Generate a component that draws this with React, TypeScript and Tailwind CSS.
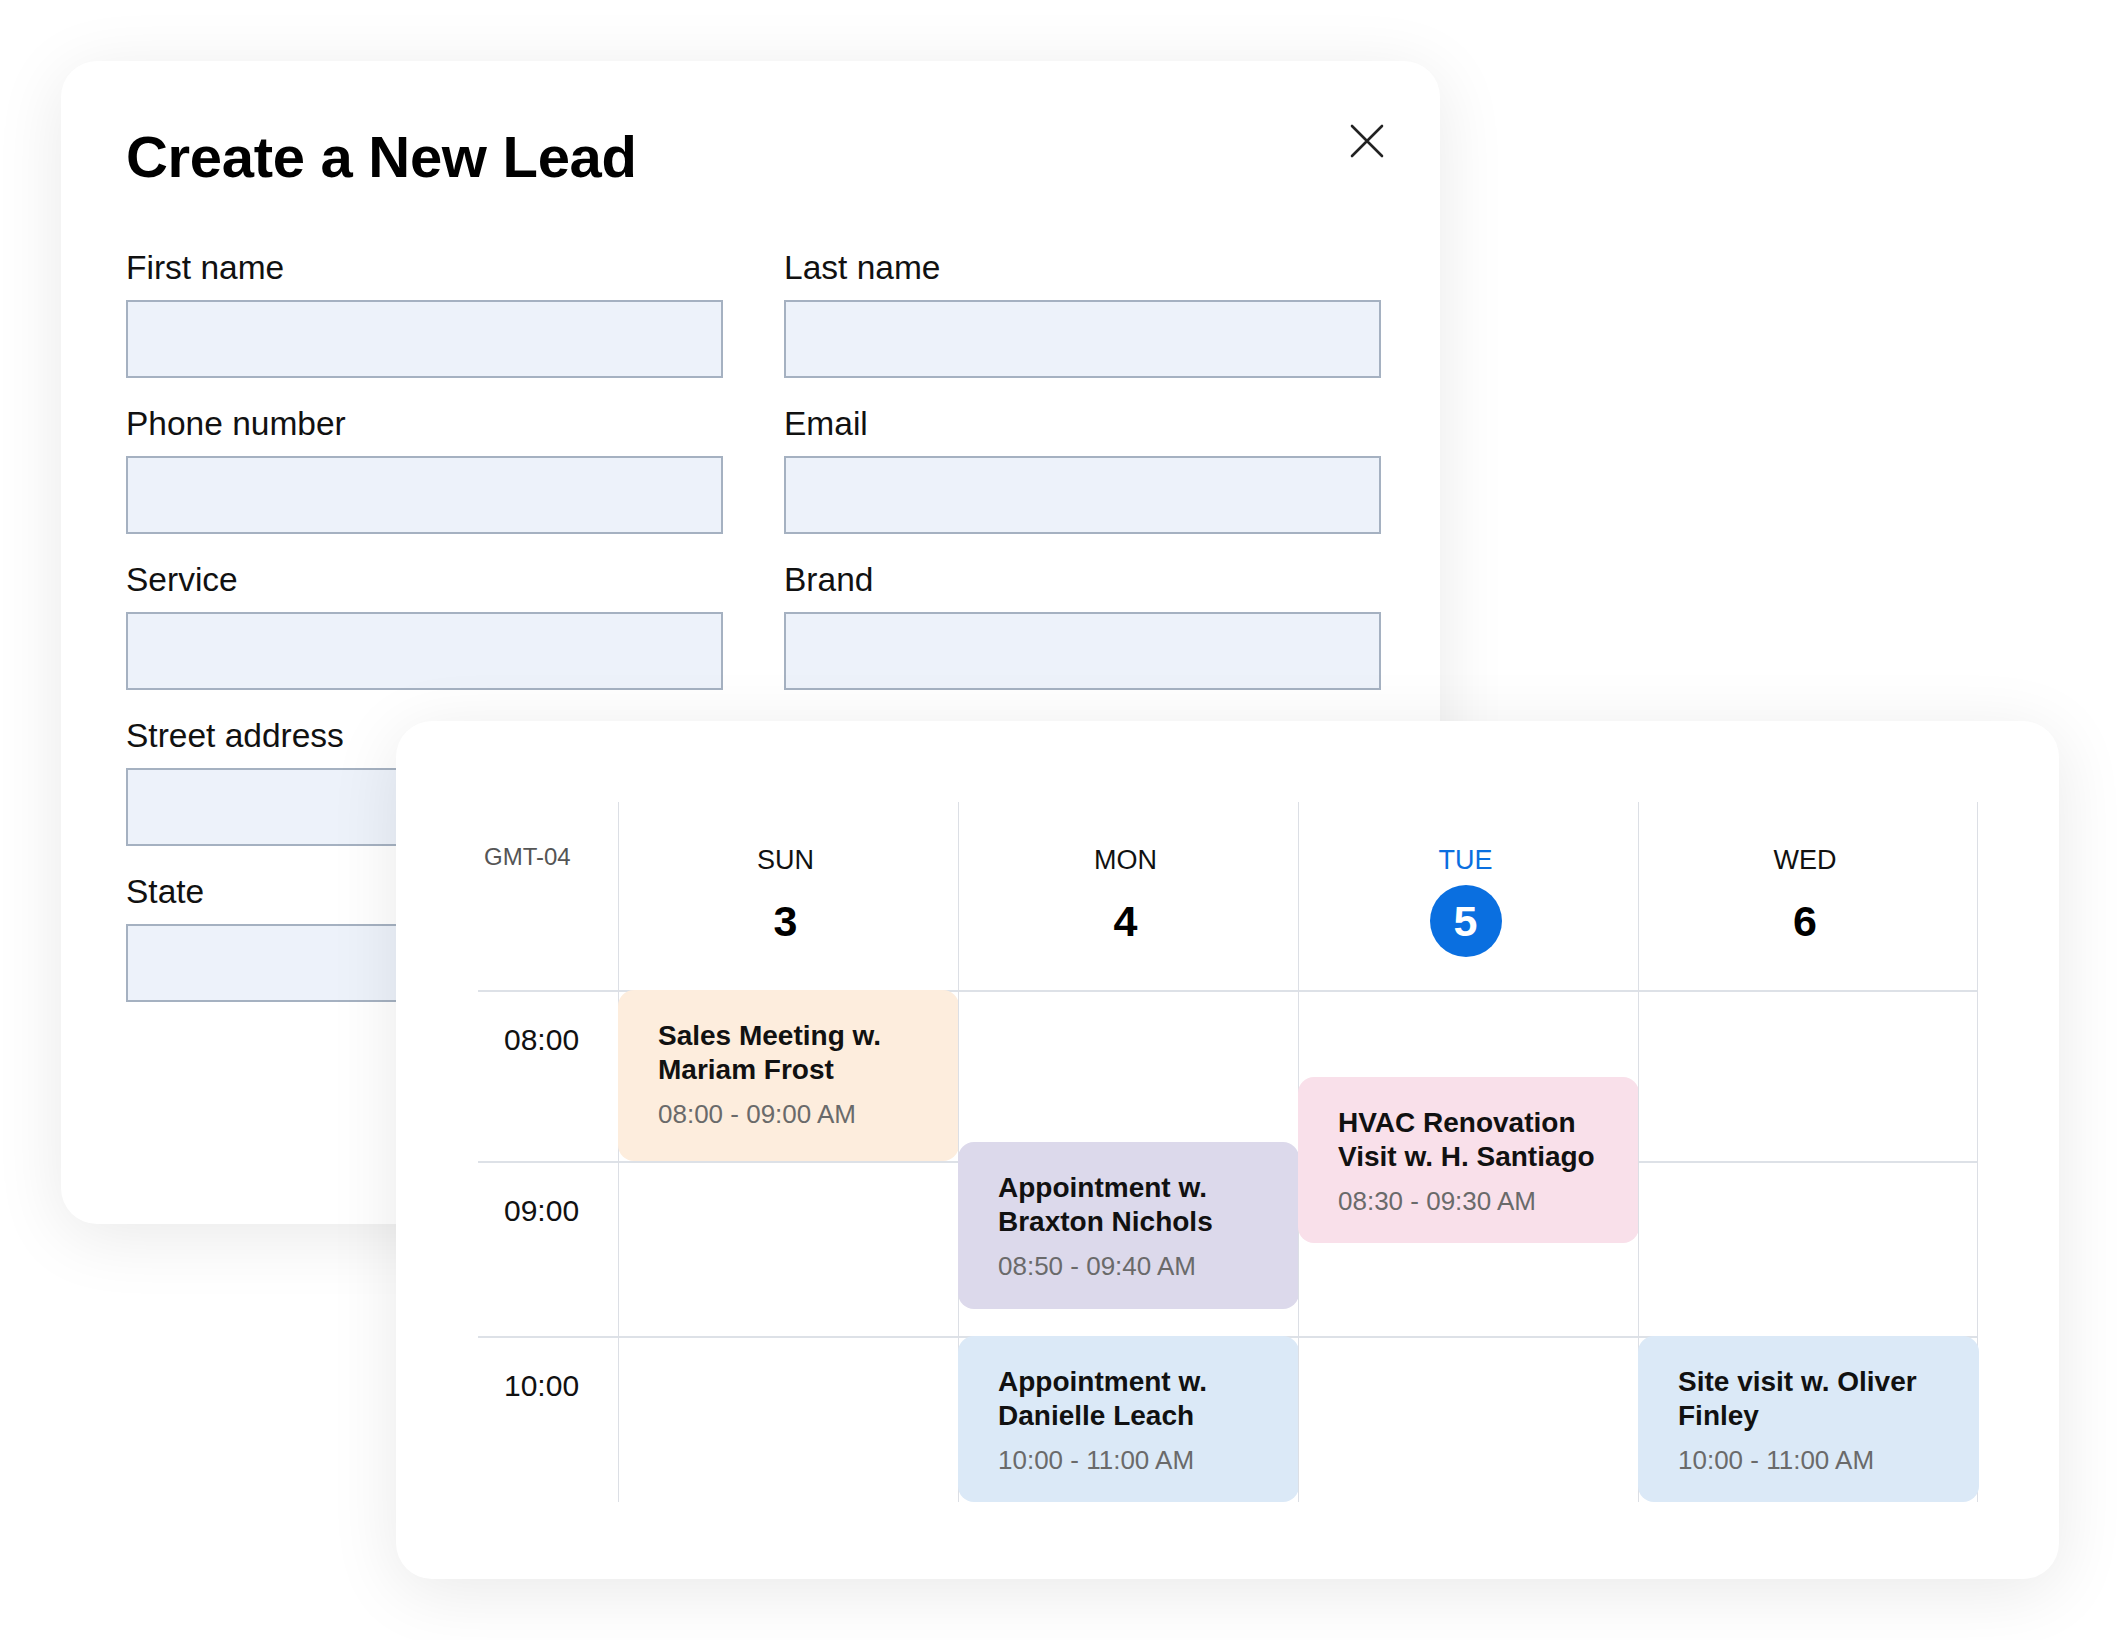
import { ReactNode } from "react";

type Field = { label: string };

const formRows: Field[][] = [
    [{ label: "First name" }, { label: "Last name" }],
    [{ label: "Phone number" }, { label: "Email" }],
    [{ label: "Service" }, { label: "Brand" }],
    [{ label: "Street address" }],
    [{ label: "State" }],
];

type CalEvent = {
    title: string;
    time: string;
    top: number;
    height: number;
    color: string;
};

const days: { name: string; date: number; today?: boolean; events: CalEvent[] }[] = [
    {
        name: "SUN",
        date: 3,
        events: [
            {
                title: "Sales Meeting w. Mariam Frost",
                time: "08:00 - 09:00 AM",
                top: 0,
                height: 171,
                color: "bg-[#fdeddd]",
            },
        ],
    },
    {
        name: "MON",
        date: 4,
        events: [
            {
                title: "Appointment w. Braxton Nichols",
                time: "08:50 - 09:40 AM",
                top: 152,
                height: 167,
                color: "bg-[#dcd9eb]",
            },
            {
                title: "Appointment w. Danielle Leach",
                time: "10:00 - 11:00 AM",
                top: 346,
                height: 166,
                color: "bg-[#dbe9f7]",
            },
        ],
    },
    {
        name: "TUE",
        date: 5,
        today: true,
        events: [
            {
                title: "HVAC Renovation Visit w. H. Santiago",
                time: "08:30 - 09:30 AM",
                top: 87,
                height: 166,
                color: "bg-[#f9e0ea]",
            },
        ],
    },
    {
        name: "WED",
        date: 6,
        events: [
            {
                title: "Site visit w. Oliver Finley",
                time: "10:00 - 11:00 AM",
                top: 346,
                height: 166,
                color: "bg-[#dbe9f7]",
            },
        ],
    },
];

const hours = [
    { label: "08:00", h: "h-[171px]" },
    { label: "09:00", h: "h-[175px]" },
    { label: "10:00", h: "h-[166px]" },
];

const CloseIcon = () => (
    <svg width="34" height="34" viewBox="0 0 34 34" fill="none">
        <path d="M2 2 32 32M32 2 2 32" stroke="#222" strokeWidth="2.6" strokeLinecap="round" />
    </svg>
);

const FormField = ({ label, first }: Field & { first?: boolean }) => (
    <div className={`flex flex-col ${first ? "col-start-1" : ""}`}>
        <label className="text-[33.5px] leading-[40px] text-[#111] mb-[12px]">{label}</label>
        <div className="h-[78px] bg-[#edf2fa] border-2 border-[#a5b1c1]" />
    </div>
);

const LeadForm = () => (
    <div className="absolute left-[61px] top-[61px] w-[1379px] h-[1163px] rounded-[36px] bg-white shadow-[0_12px_70px_rgba(0,0,0,0.09)] pl-[65px] pr-[59px] pt-[64px]">
        <div className="flex justify-between items-start">
            <h1 className="text-[58px] leading-[64px] font-bold text-black tracking-[-0.3px]">
                Create a New Lead
            </h1>
            <button className="mt-[-1px] mr-[-3px]">
                <CloseIcon />
            </button>
        </div>
        <div className="grid grid-cols-[597px_597px] gap-x-[61px] gap-y-[26px] mt-[59px]">
            {formRows.map((row) =>
                row.map((f, j) => <FormField key={f.label} label={f.label} first={j === 0} />),
            )}
        </div>
    </div>
);

const EventCard = ({ ev }: { ev: CalEvent }) => (
    <div
        className={`absolute left-[-1px] w-[341px] rounded-[16px] pl-[40px] pr-[16px] pt-[29px] ${ev.color}`}
        style={{ top: ev.top, height: ev.height }}
    >
        <p className="text-[28px] leading-[34px] font-bold text-[#111]">{ev.title}</p>
        <p className="text-[26px] leading-[30px] text-[#6a6a6a] mt-[12px]">{ev.time}</p>
    </div>
);

const DayHeader = ({ name, date, today }: { name: string; date: number; today?: boolean }) => (
    <div className="w-[340px] h-[188px] border-l border-[#dcdfe5] flex flex-col items-center pt-[42px] pr-[6px] last:border-r">
        <span className={`text-[27px] leading-[32px] ${today ? "text-[#0a6fe0]" : "text-[#111]"}`}>
            {name}
        </span>
        {today ? (
            <span className="mt-[9px] w-[72px] h-[72px] rounded-full bg-[#0a6fe0] text-white text-[43px] font-bold flex items-center justify-center">
                {date}
            </span>
        ) : (
            <span className="mt-[9px] h-[72px] text-[43px] font-bold text-black flex items-center">
                {date}
            </span>
        )}
    </div>
);

const WeekCalendar = () => (
    <div className="absolute left-[396px] top-[721px] w-[1663px] h-[858px] rounded-[36px] bg-white shadow-[0_12px_70px_rgba(0,0,0,0.09)] pl-[82px] pt-[81px]">
        <div className="flex">
            <div className="w-[140px] pl-[6px] pt-[41px] text-[24px] leading-[28px] text-[#555]">GMT-04</div>
            {days.map((d) => (
                <DayHeader key={d.name} name={d.name} date={d.date} today={d.today} />
            ))}
        </div>
        <div className="flex">
            <div className="w-[140px] flex flex-col">
                {hours.map((h) => (
                    <div key={h.label} className={`${h.h} border-t-2 border-[#dde1e7] pl-[26px] pt-[30px]`}>
                        <span className="text-[30px] leading-[36px] text-[#111]">{h.label}</span>
                    </div>
                ))}
            </div>
            {days.map((d, i) => (
                <div
                    key={d.name}
                    className={`relative w-[340px] flex flex-col border-l border-[#dcdfe5] ${
                        i === days.length - 1 ? "border-r" : ""
                    }`}
                >
                    {hours.map((h) => (
                        <div key={h.label} className={`${h.h} border-t-2 border-[#dde1e7]`} />
                    ))}
                    {d.events.map((ev) => (
                        <EventCard key={ev.title} ev={ev} />
                    ))}
                </div>
            ))}
        </div>
    </div>
);

const Layer = ({ children }: { children: ReactNode }) => (
    <div className="relative w-[2120px] h-[1640px] bg-white overflow-hidden font-['Liberation_Sans',Arial,sans-serif]">
        {children}
    </div>
);

export default function App() {
    return (
        <Layer>
            <LeadForm />
            <WeekCalendar />
        </Layer>
    );
}
